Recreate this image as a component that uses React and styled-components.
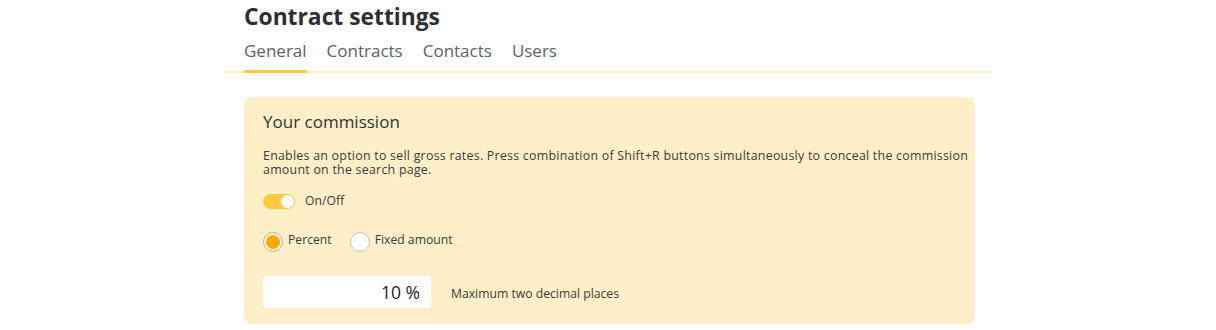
import React, { useState } from 'react'
import styled, { createGlobalStyle } from 'styled-components'

const GlobalStyle = createGlobalStyle`
  body {
    margin: 0;
    background: #ffffff;
    font-family: 'Open Sans', 'Liberation Sans', sans-serif;
    color: #333333;
  }
`

const Page = styled.div`
  width: 766px;
  margin-left: calc(50% - 384px);
  padding-top: 2px;
`

const Title = styled.h1`
  margin: 0;
  padding-left: 20px;
  font-size: 22.8px;
  line-height: 30px;
  font-weight: 700;
  color: #2b2f33;
`

const TabBar = styled.div`
  display: flex;
  gap: 20px;
  padding-left: 20px;
  margin-top: 6px;
  border-bottom: 2px solid #ffeebd;
`

const Tab = styled.div`
  font-size: 17px;
  line-height: 24px;
  padding: 1px 0 7px;
  color: #58626c;
  margin-bottom: -2px;
  border-bottom: 3px solid ${p => (p.$active ? '#ffc940' : 'transparent')};
`

const Card = styled.section`
  margin: 24px 15px 0 20px;
  background: #ffefc9;
  border-radius: 8px;
  padding: 13px 4px 16px 19px;
`

const CardTitle = styled.h2`
  margin: 0;
  font-size: 17px;
  line-height: 24px;
  font-weight: 400;
  color: #2f3337;
`

const Description = styled.p`
  margin: 15px 0 0;
  max-width: 710px;
  font-size: 12.4px;
  letter-spacing: 0.25px;
  line-height: 14px;
  color: #3a3a3a;
`

const Row = styled.div`
  display: flex;
  align-items: center;
  gap: ${p => p.$gap || 0}px;
  margin-top: ${p => p.$top || 0}px;
`

const Switch = styled.button`
  position: relative;
  width: 32px;
  height: 15px;
  padding: 0;
  border: none;
  border-radius: 8px;
  background: ${p => (p.$on ? '#ffc940' : '#d8d8d8')};
  cursor: pointer;

  &::after {
    content: '';
    position: absolute;
    top: 1px;
    left: ${p => (p.$on ? '18px' : '1px')};
    width: 13px;
    height: 13px;
    border-radius: 50%;
    background: #ffffff;
  }
`

const SmallLabel = styled.span`
  font-size: 12.2px;
  line-height: 16px;
  color: #3a3a3a;
  margin-left: ${p => p.$left || 0}px;
  margin-top: ${p => p.$down || 0}px;
`

const RadioLabel = styled.label`
  display: flex;
  align-items: center;
  gap: 5px;
  margin-right: 18px;
  cursor: pointer;
`

const RadioDot = styled.span`
  box-sizing: border-box;
  width: 20px;
  height: 20px;
  border-radius: 50%;
  border: 1px solid #bdbdbd;
  background: ${p => (p.$checked ? '#ffa800' : '#ffffff')};
  box-shadow: inset 0 0 0 ${p => (p.$checked ? '2px' : '0')} #ffffff;
  margin-top: 3px;
`

const RadioText = styled.span`
  font-size: 12.2px;
  line-height: 16px;
  color: #3a3a3a;
  align-self: flex-start;
  margin-top: 3px;
`

const AmountInput = styled.input`
  box-sizing: border-box;
  width: 168px;
  height: 32px;
  border: none;
  border-radius: 4px;
  background: #ffffff;
  padding: 0 11px 0 10px;
  text-align: right;
  font-family: 'Open Sans', 'Liberation Sans', sans-serif;
  font-size: 17.5px;
  color: #222222;
  outline: none;
`

function App() {
  const [on, setOn] = useState(true)
  const [mode, setMode] = useState('percent')
  const [value, setValue] = useState('10 %')
  const tabs = ['General', 'Contracts', 'Contacts', 'Users']

  return (
    <Page>
      <GlobalStyle />
      <Title>Contract settings</Title>
      <TabBar>
        {tabs.map((tab, i) => (
          <Tab key={tab} $active={i === 0}>{tab}</Tab>
        ))}
      </TabBar>
      <Card>
        <CardTitle>Your commission</CardTitle>
        <Description>
          Enables an option to sell gross rates. Press combination of Shift+R buttons simultaneously to conceal the commission amount on the search page.
        </Description>
        <Row $top={16}>
          <Switch $on={on} onClick={() => setOn(!on)} />
          <SmallLabel $left={10}>On/Off</SmallLabel>
        </Row>
        <Row $top={20}>
          <RadioLabel onClick={() => setMode('percent')}>
            <RadioDot $checked={mode === 'percent'} />
            <RadioText>Percent</RadioText>
          </RadioLabel>
          <RadioLabel onClick={() => setMode('fixed')}>
            <RadioDot $checked={mode === 'fixed'} />
            <RadioText>Fixed amount</RadioText>
          </RadioLabel>
        </Row>
        <Row $top={24} $gap={20}>
          <AmountInput value={value} onChange={e => setValue(e.target.value)} />
          <SmallLabel $down={4}>Maximum two decimal places</SmallLabel>
        </Row>
      </Card>
    </Page>
  )
}

export default App
